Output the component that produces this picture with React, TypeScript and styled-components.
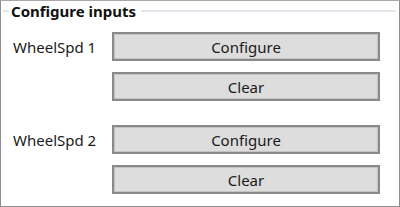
import React, { FC } from 'react';
import styled, { createGlobalStyle } from 'styled-components';

const GlobalStyle = createGlobalStyle`
  html, body {
    margin: 0;
    padding: 0;
    background: #ffffff;
  }
  body {
    font-family: 'Noto Sans', 'Open Sans', sans-serif;
  }
`;

interface InputRowProps {
  name: string;
}

const InputRow: FC<InputRowProps> = ({ name }) => {
  return (
    <InputGrid>
      <Label>{name}</Label>
      <Button>Configure</Button>
      <Button>Clear</Button>
    </InputGrid>
  );
};

const App: FC = () => {
  return (
    <>
      <GlobalStyle />
      <Frame>
        <Header>
          <LeftRule />
          <Title>Configure inputs</Title>
          <Rule />
        </Header>
        <Content>
          <InputRow name="WheelSpd 1" />
          <InputRow name="WheelSpd 2" />
        </Content>
      </Frame>
    </>
  );
};

export default App;

const Frame = styled.div`
  width: 400px;
  height: 207px;
  box-sizing: border-box;
  border: 1px solid #8f8f8f;
  border-top-color: #a8a8a8;
  background: #ffffff;
  display: flex;
  flex-direction: column;
`;

const Header = styled.div`
  display: flex;
  align-items: center;
  height: 20px;
  padding: 0 3px 0 2px;
`;

const Rule = styled.div`
  flex: 1;
  height: 2px;
  background-color: #e2e7ed;
`;

const LeftRule = styled(Rule)`
  flex: 0 0 6px;
`;

const Title = styled.div`
  font-size: 15px;
  font-weight: 700;
  color: #111111;
  padding: 0 5px 0 2px;
  line-height: 20px;
  white-space: nowrap;
`;

const Content = styled.div`
  display: flex;
  flex-direction: column;
  gap: 24px;
  padding: 11px 0 0 12px;
`;

const InputGrid = styled.div`
  display: grid;
  grid-template-columns: 99px 268px;
  grid-template-rows: 29px 29px;
  row-gap: 11px;
`;

const Label = styled.div`
  display: flex;
  align-items: center;
  font-size: 15px;
  color: #1a1a1a;
  white-space: nowrap;
`;

const Button = styled.div`
  grid-column: 2;
  box-sizing: border-box;
  display: grid;
  place-items: center;
  background-color: #dddddd;
  border: 2px solid #8a8a8a;
  box-shadow: inset 0 0 0 1px #c4c4c4;
  font-size: 15px;
  color: #1a1a1a;
  cursor: default;
  user-select: none;
`;
